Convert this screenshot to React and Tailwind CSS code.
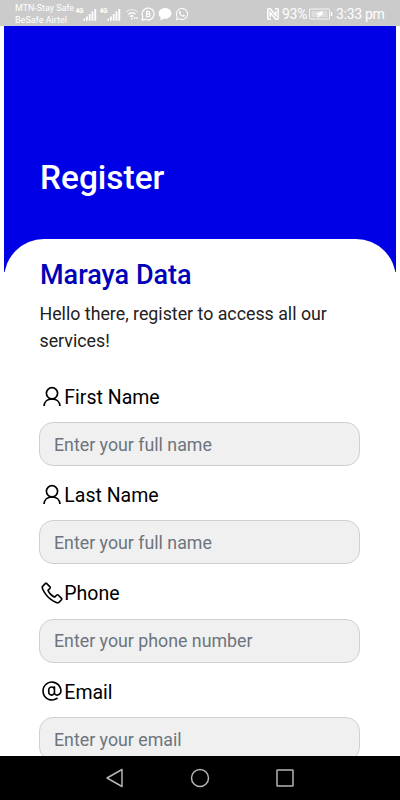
import React, { useState } from "react";
import { LiaPhoneSolid, LiaAtSolid } from "react-icons/lia";
import { FaWhatsapp } from "react-icons/fa";

function UserIcon({ className }) {
  return (
    <svg viewBox="0 0 26 26" className={className} fill="none" stroke="currentColor" strokeWidth="1.7">
      <circle cx="13" cy="9.3" r="5.6" />
      <path d="M5 22c.3-4.200 3.600-7.100 8-7.100s7.700 2.900 8 7.100" />
    </svg>
  );
}

const fields = [
  { name: "firstName", label: "First Name", placeholder: "Enter your full name", Icon: UserIcon },
  { name: "lastName", label: "Last Name", placeholder: "Enter your full name", Icon: UserIcon },
  { name: "phone", label: "Phone", placeholder: "Enter your phone number", Icon: LiaPhoneSolid },
  { name: "email", label: "Email", placeholder: "Enter your email", Icon: LiaAtSolid },
];

function Signal() {
  return (
    <svg viewBox="0 0 22 16" className="w-[22px] h-4" fill="#fff">
      <text x="-0.5" y="7" fontSize="6.5" fontWeight="700" letterSpacing="-0.3">4G</text>
      <rect x="7.5" y="12.5" width="1.5" height="2.300" />
      <rect x="10" y="10.500" width="1.800" height="4.300" />
      <rect x="12.800" y="8" width="1.800" height="6.800" />
      <rect x="15.600" y="5.500" width="1.800" height="9.300" />
      <rect x="18.400" y="3" width="1.800" height="11.800" />
    </svg>
  );
}

function StatusBar() {
  return (
    <div className="h-[26px] shrink-0 bg-[#cbcbcb] text-white flex items-center pl-[15px] pr-4">
      <div className="w-[61px] text-[9px] leading-[12px] pt-[2px] whitespace-nowrap">
        <div className="tracking-[-0.05px]">MTN-Stay Safe</div>
        <div>BeSafe Airtel</div>
      </div>
      <div className="flex items-center pt-px">
        <Signal />
        <div className="w-[2px]" />
        <Signal />
        <svg viewBox="0 0 14 14" className="w-[14px] h-[14px] ml-[3px]" fill="none" stroke="#fff" strokeWidth="1.3">
          <path d="M1.2 5C4.4 1.8 9.6 1.8 12.8 5" opacity="0.55" />
          <path d="M3 7.4C5 5.4 8.4 5.4 10.4 7" />
          <path d="M5 9.6C6 8.6 7.4 8.6 8.4 9.4" />
          <path d="M6 11.6h1.6M9 11.2h1.4M11.4 11.2h1.4" strokeWidth="1.8" />
        </svg>
        <svg viewBox="0 0 14 14" className="w-[14px] h-[14px] ml-[2px]" fill="none" stroke="#fff" strokeWidth="1.2">
          <path d="M1 13l.8-3.200A6 6 0 1 1 4.300 12.300z" />
          <path d="M5.6 4.4h1.8a1.2 1.2 0 0 1 0 2.5H5.6zM5.6 6.9h2.1a1.3 1.3 0 0 1 0 2.7H5.6z" />
        </svg>
        <svg viewBox="0 0 14 14" className="w-[14px] h-[14px] ml-[3px]" fill="#fff">
          <path d="M7 1c3.500 0 6.400 2.400 6.400 5.400S10.500 11.800 7 11.800c-.5 0-1 0-1.400-.1L2.200 13.500l.5-3C1.400 9.500.6 8 .6 6.400.6 3.400 3.500 1 7 1z" />
        </svg>
        <FaWhatsapp className="w-[14px] h-[14px] ml-[3px]" />
      </div>
      <div className="ml-auto flex items-center pt-[2px]">
        <svg viewBox="0 0 12 12" className="w-3 h-3" fill="none" stroke="#fff">
          <path d="M4 11.300H1.900Q.8 11.300.8 10.200V1.800Q.8.700 1.900.700h1.300L8.800 7.500V3" strokeWidth="1.500" />
          <path d="M8 .7h2.100q1.100 0 1.100 1.100v8.400q0 1.100-1.100 1.100H8.800L3.200 4.500V9" strokeWidth="1.500" />
        </svg>
        <span className="ml-[3px] w-[25px] text-[14px] leading-4 tracking-[-0.4px]">93%</span>
        <svg viewBox="0 0 24 12" className="w-6 h-3 ml-[2px]" fill="none" stroke="#fff">
          <rect x="0.5" y="1" width="20" height="10" rx="1" opacity="0.8" />
          <rect x="2.500" y="3" width="16" height="6" fill="#fff" opacity="0.35" stroke="none" />
          <path d="M14 2.500L6.500 6l3 .8L8 10 14.500 6l-1.500-.5z" fill="#fff" stroke="none" />
          <path d="M22.500 4v4" strokeWidth="1.500" />
        </svg>
        <span className="ml-[3px] w-[48px] text-[14px] leading-4 tracking-[-0.3px] whitespace-nowrap">3:33 pm</span>
      </div>
    </div>
  );
}

function NavBar() {
  return (
    <div className="h-[44px] shrink-0 bg-black flex justify-center items-center gap-[65px]">
      <svg viewBox="0 0 20 20" className="w-5 h-5" fill="none" stroke="#b4b4b4" strokeWidth="1.5" strokeLinejoin="round">
        <path d="M17 1.500v17L2 10z" />
      </svg>
      <svg viewBox="0 0 20 20" className="w-5 h-5" fill="none" stroke="#b4b4b4" strokeWidth="1.5">
        <circle cx="10" cy="10" r="8.500" />
      </svg>
      <svg viewBox="0 0 20 20" className="w-5 h-5" fill="none" stroke="#b4b4b4" strokeWidth="1.5">
        <rect x="2" y="2" width="16" height="16" rx="0.5" />
      </svg>
    </div>
  );
}

export default function App() {
  const [form, setForm] = useState({});

  const handleChange = (e) => {
    setForm({ ...form, [e.target.name]: e.target.value });
  };

  return (
    <div className="w-[400px] h-[800px] flex flex-col overflow-hidden bg-white font-[Roboto,sans-serif]">
      <StatusBar />
      <div className="flex-1 min-h-0 overflow-hidden mx-1">
        <div className="h-[246px] bg-[#0000e6] pt-[130px] px-9">
          <h1 className="text-[33.400px] leading-[44px] font-medium text-white">Register</h1>
        </div>
        <div className="-mt-[33px] rounded-t-[40px] bg-white px-[35px] pt-[18px]">
          <h2 className="pl-px text-[27px] leading-9 font-medium text-[#0000b8]">Maraya Data</h2>
          <p className="mt-[8px] pl-[0.5px] text-[17.800px] leading-[26.500px] text-[#212121]">
            Hello there, register to access all our services!
          </p>
          <form className="mt-[28px]">
            {fields.map(({ name, label, placeholder, Icon }) => (
              <div key={name} className="h-[98.300px]">
                <label htmlFor={name} className="flex items-center h-[31px] text-[19.500px] text-black">
                  <Icon className="w-[26px] h-[26px] -mr-[0.700px] mb-[2px]" />
                  {label}
                </label>
                <input
                  id={name}
                  name={name}
                  placeholder={placeholder}
                  value={form[name] || ""}
                  onChange={handleChange}
                  className="mt-[9.200px] block w-[321px] h-[44px] rounded-[14px] border border-[#d0d0d2] bg-[#f0f0f0] px-[14px] text-[17.800px] placeholder:text-[#6c757d] outline-none"
                />
              </div>
            ))}
          </form>
        </div>
      </div>
      <NavBar />
    </div>
  );
}
